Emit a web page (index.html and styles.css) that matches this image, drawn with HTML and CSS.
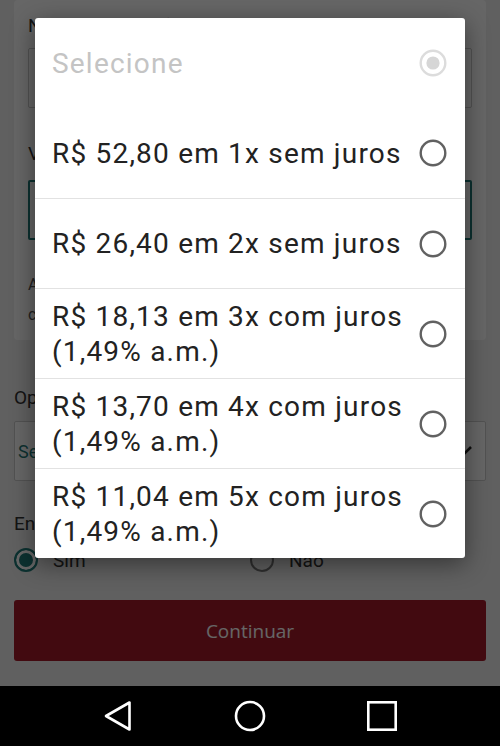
FILE: index.html
```html
<!DOCTYPE html>
<html lang="pt-BR">
<head>
    <meta charset="UTF-8">
    <meta name="viewport" content="width=device-width, initial-scale=1.0">
    <title>Pagamento</title>
    <link rel="stylesheet" href="styles.css">
</head>
<body>

<div class="screen">
    <div class="page">
        <div class="card">
            <label class="field-label">Número do cartão</label>
            <div class="input"></div>
            <label class="field-label">Valor</label>
            <div class="input input-focus"></div>
            <p class="hint">As parcelas com juros são calculadas<br>com base no valor total da compra.</p>
        </div>

        <label class="field-label">Opções de parcelamento</label>
        <div class="select">
            <span class="select-text">Selecione</span>
            <svg class="chevron" width="18" height="12" viewBox="0 0 18 12"><path d="M2 2 L9 9 L16 2" fill="none" stroke="#222" stroke-width="2.5"/></svg>
        </div>

        <label class="field-label email-label">Enviar comprovante por e-mail?</label>
        <div class="radio-row">
            <div class="radio-choice"><span class="dot dot-on"></span>Sim</div>
            <div class="radio-choice"><span class="dot"></span>Não</div>
        </div>

        <button class="btn-continue">Continuar</button>
    </div>

    <div class="overlay"></div>

    <!-- installment picker -->
    <div class="dialog">
        <div class="dialog-title">
            <span>Selecione</span>
            <svg class="radio" width="28" height="28" viewBox="0 0 28 28"><circle cx="14" cy="14" r="12.3" fill="none" stroke="#dcdcdc" stroke-width="2.4"/><circle cx="14" cy="14" r="6.6" fill="#d6d6d6"/></svg>
        </div>
        <ul class="option-list" id="optionList"></ul>
    </div>
</div>

<div class="navbar">
    <svg width="30" height="32" viewBox="0 0 30 32"><path d="M26.5 2.5 L26.5 29.5 L3 16 Z" fill="none" stroke="#fff" stroke-width="2.6" stroke-linejoin="round"/></svg>
    <svg width="32" height="32" viewBox="0 0 32 32"><circle cx="16" cy="16" r="14" fill="none" stroke="#fff" stroke-width="2.6"/></svg>
    <svg width="32" height="32" viewBox="0 0 32 32"><rect x="2.3" y="2.3" width="27.4" height="27.4" fill="none" stroke="#fff" stroke-width="2.6"/></svg>
</div>

<script>
    var options = [
        'R$ 52,80 em 1x sem juros',
        'R$ 26,40 em 2x sem juros',
        'R$ 18,13 em 3x com juros (1,49% a.m.)',
        'R$ 13,70 em 4x com juros (1,49% a.m.)',
        'R$ 11,04 em 5x com juros (1,49% a.m.)'
    ];

    // Build the installment rows
    function displayOptions() {
        var list = document.getElementById('optionList');
        list.innerHTML = '';
        options.forEach(function(text) {
            var item = document.createElement('li');
            item.className = 'option-item';
            item.innerHTML = '<span class="option-text">' + text + '</span>' +
                '<svg class="radio" width="28" height="28" viewBox="0 0 28 28"><circle cx="14" cy="14" r="12.3" fill="none" stroke="#616161" stroke-width="2.4"/></svg>';
            list.appendChild(item);
        });
    }

    displayOptions();
</script>

</body>
</html>
```

FILE: styles.css
```css
body {
    margin: 0;
    padding: 0;
    width: 500px;
    height: 746px;
    overflow: hidden;
    font-family: Roboto, "Noto Sans", sans-serif;
}

.screen {
    position: relative;
    height: 686px;
    overflow: hidden;
    background-color: #efefef;
}

.page {
    padding: 0 14px;
}

.card {
    background-color: #fff;
    border-radius: 4px;
    padding: 14px 14px 10px;
    margin-top: 0;
}

.field-label {
    display: block;
    font-size: 19px;
    line-height: 24px;
    color: #333;
}

.input {
    height: 58px;
    border: 1px solid #ccc;
    border-radius: 2px;
    margin: 10px 0 34px;
}

.input-focus {
    border: 2px solid #1f7a78;
    height: 56px;
    margin: 14px 0 30px;
}

.hint {
    margin: 0;
    font-size: 16px;
    line-height: 30px;
    color: #555;
}

.page > .field-label {
    margin-top: 46px;
}

.page > .email-label {
    margin-top: 31px;
}

.select {
    display: flex;
    align-items: center;
    justify-content: space-between;
    height: 58px;
    border: 1px solid #ccc;
    border-radius: 2px;
    margin-top: 11px;
    padding: 0 12px 0 3px;
    background-color: #fff;
}

.select-text {
    font-size: 18px;
    color: #1f7a78;
}

.radio-row {
    display: flex;
    margin-top: 12px;
}

.radio-choice {
    display: flex;
    align-items: center;
    gap: 15px;
    width: 250px;
    font-size: 19px;
    color: #333;
}

.dot {
    width: 20px;
    height: 20px;
    border: 2px solid #777;
    border-radius: 50%;
}

.dot-on {
    border-color: #1f7a78;
    background-color: #1f7a78;
    box-shadow: inset 0 0 0 3px #fff;
}

.btn-continue {
    display: block;
    width: 100%;
    height: 61px;
    margin-top: 28px;
    border: none;
    border-radius: 3px;
    background-color: #a51b28;
    color: #fff;
    font-family: "Open Sans", sans-serif;
    font-size: 19px;
}

.overlay {
    position: absolute;
    top: 0;
    left: 0;
    right: 0;
    bottom: 0;
    background-color: rgba(0, 0, 0, 0.6);
}

.dialog {
    position: absolute;
    top: 18px;
    left: 35px;
    width: 430px;
    background-color: #fff;
    border-radius: 3px;
    box-shadow: 0 6px 24px rgba(0, 0, 0, 0.45);
}

.dialog-title,
.option-item {
    display: flex;
    align-items: center;
    justify-content: space-between;
    height: 90px;
    box-sizing: border-box;
    padding: 0 18px 0 17px;
    font-size: 28px;
    line-height: 35px;
    letter-spacing: 1.2px;
}

.dialog-title {
    color: #c4c4c4;
}

.option-list {
    list-style: none;
    margin: 0;
    padding: 0;
}

.option-item {
    color: #222;
}

.option-item + .option-item {
    border-top: 1px solid #e2e2e2;
}

.option-text {
    flex: 1;
    padding-right: 6px;
}

.radio {
    flex-shrink: 0;
}

.navbar {
    display: flex;
    align-items: center;
    justify-content: space-between;
    height: 60px;
    padding: 0 102px 0 103px;
    background-color: #000;
}
```
